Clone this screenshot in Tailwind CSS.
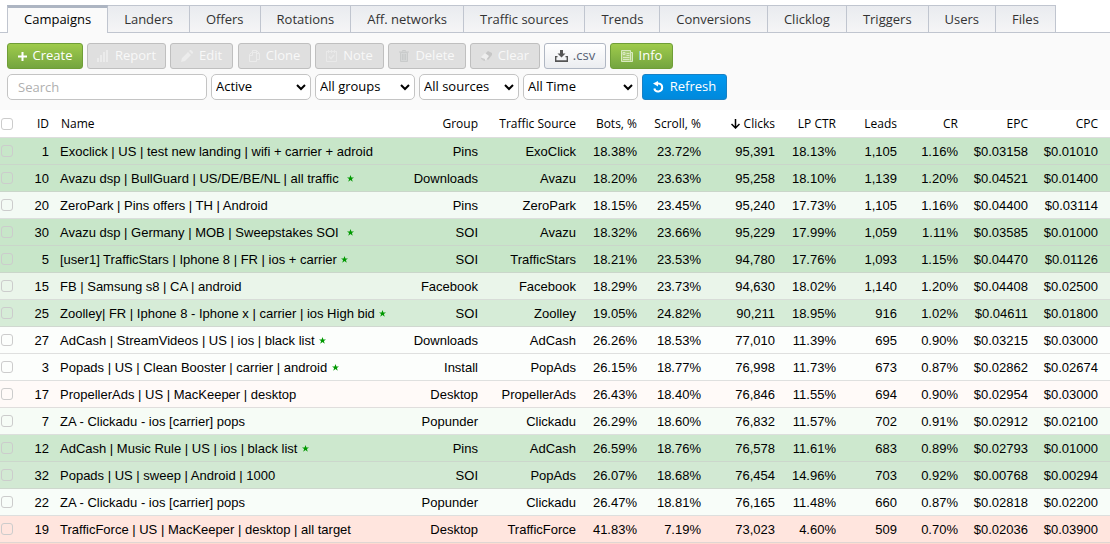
<!DOCTYPE html>
<html lang="en">
<head>
<meta charset="utf-8">
<meta name="viewport" content="width=device-width, initial-scale=1">
<title>Campaigns</title>
<script src="https://cdn.jsdelivr.net/npm/@tailwindcss/browser@4"></script>
</head>
<body class="overflow-x-hidden bg-white font-['Open_Sans',sans-serif] text-[13px] text-black">
<header class="bg-[#fafafa] pb-[10px]">
  <nav class="flex bg-white pt-[5px] font-medium leading-[18px] text-[#333]">
    <span class="w-[7px] border-b border-[#c0c5cf]"></span>
    <a href="#" aria-current="page" class="h-7 border-x border-t-3 border-[#c0c5cf] border-t-[#adb5c2] bg-[#fafafa] px-4 pt-[2px] text-black">Campaigns</a>
    <div id="tabs" class="flex grow border-b border-[#c0c5cf]"></div>
  </nav>
  <div class="mt-[10px] flex gap-1 px-[7px]">
    <button class="flex h-[26px] w-[76px] items-center justify-center gap-[6px] rounded-[3px] border border-[#6f9e37] bg-linear-to-b from-[#9fcb4b] to-[#74a540] text-white"><svg class="size-[9px]" viewBox="0 0 9 9" fill="currentColor"><path d="M3.500 0h2v3.500H9v2H5.500V9h-2V5.500H0v-2h3.500z"/></svg>Create</button>
    <button disabled class="flex h-[26px] w-[79px] items-center justify-center gap-[6px] rounded-[3px] border border-[#bfbfbf] bg-[#dfdfdf] text-[#f8f8f8]"><svg class="size-3" viewBox="0 0 12 12" fill="#ebebeb"><path d="M0 8h2v4H0zM3 5h2v7H3zM6 2h2v10H6zM9 0h2v12H9z"/></svg>Report</button>
    <button disabled class="flex h-[26px] w-[63px] items-center justify-center gap-[6px] rounded-[3px] border border-[#bfbfbf] bg-[#dfdfdf] text-[#f8f8f8]"><svg class="size-3" viewBox="0 0 12 12" fill="#ececec"><path d="M0 12l1-4 6-6 3 3-6 6zM8 1l1-1h1l2 2v1l-1 1z"/></svg>Edit</button>
    <button disabled class="ml-px flex h-[26px] w-[73px] items-center justify-center gap-[6px] rounded-[3px] border border-[#bfbfbf] bg-[#dfdfdf] text-[#f8f8f8]"><svg class="h-3 w-[11px]" viewBox="0 0 11 12" fill="none" stroke="#ebebeb"><path d="M3.500 2.500v-2h4l3 3v6h-3M7.500.500v3h3M3.500 2.500h-1l-2 2v7h7v-9zM3.500 2.500v3h-3"/></svg>Clone</button>
    <button disabled class="flex h-[26px] w-[69px] items-center justify-center gap-[6px] rounded-[3px] border border-[#bfbfbf] bg-[#dfdfdf] text-[#f8f8f8]"><svg class="h-3 w-[11px]" viewBox="0 0 11 12" fill="none" stroke="#e9e9e9"><path d="M.500 1.500h10v10H.500zM0 1.500h11M2.500 0v3M5.500 0v3M8.500 0v3"/><path stroke-width="1.500" d="M3 6.500l2 2.200L8 5"/></svg>Note</button>
    <button disabled class="flex h-[26px] w-[78px] items-center justify-center gap-[6px] rounded-[3px] border border-[#bfbfbf] bg-[#dfdfdf] text-[#f8f8f8]"><svg class="h-3 w-[10px]" viewBox="0 0 10 12" fill="none" stroke="#c9cbcb"><path fill="#d5d7d7" d="M1.500 2.500h7v9h-7z"/><path d="M0 2h10M3.500 1.500v-1h3v1M3.500 4v6M5 4v6M6.500 4v6"/></svg>Delete</button>
    <button disabled class="flex h-[26px] w-[70px] items-center justify-center gap-[6px] rounded-[3px] border border-[#bfbfbf] bg-[#dfdfdf] text-[#f8f8f8]"><svg class="h-3 w-[11px]" viewBox="0 0 11 12"><path fill="#c6c6c6" d="M4 4l3-3 4 2v2L7 10 5 8z"/><path fill="#eeeeee" d="M0 7l4-4 4 3-3 4H3L0 9z"/><path fill="#cdcdcd" d="M0 7.500l4 1.500v2H3L0 9z"/></svg>Clear</button>
    <button class="flex h-[26px] w-[62px] items-center justify-center gap-[5px] rounded-[3px] border border-[#b0b7c3] bg-linear-to-b from-white to-[#ebedf0] text-[#555f73]"><svg class="h-3 w-[13px]" viewBox="0 0 13 12" fill="#555"><path d="M5 0h3v3.500h2.500L6.500 7.500l-4-4H5zM0 6h2.500v1.200H1.400v3h10.200v-3h-1.100V6H13v6H0z"/></svg>.csv</button>
    <button class="flex h-[26px] w-[63px] items-center justify-center gap-[6px] rounded-[3px] border border-[#6f9e37] bg-linear-to-b from-[#9fcb4b] to-[#74a540] text-white"><svg class="size-3" viewBox="0 0 12 12" fill="none" stroke="#d9eac0"><path fill="#abcd76" d="M.500.500h9v2h2v9H.500zM9.500 2.500v8"/><path d="M2 2.500h2v2H2zM5.500 3.500h3M5.500 5.500h3M2 7.500h6.500M2 9.500h6.500"/></svg>Info</button>
  </div>
  <div class="mt-[5px] flex gap-1 px-[7px]">
    <input aria-label="Search" placeholder="Search" class="h-[26px] w-[200px] rounded-[5px] border border-[#c4c4c4] bg-white px-[10px] placeholder:text-[#b0b0b0]">
    <div class="relative"><select aria-label="Status" class="h-[26px] w-[100px] appearance-none rounded-[5px] border border-[#c4c4c4] bg-white pl-1"><option>Active</option></select><svg class="pointer-events-none absolute right-[5px] top-[10px] h-[7px] w-[10px]" viewBox="0 0 10 7" fill="none" stroke="black" stroke-width="2"><path d="M1 1l4 4 4-4"/></svg></div>
    <div class="relative"><select aria-label="Group" class="h-[26px] w-[100px] appearance-none rounded-[5px] border border-[#c4c4c4] bg-white pl-1"><option>All groups</option></select><svg class="pointer-events-none absolute right-[5px] top-[10px] h-[7px] w-[10px]" viewBox="0 0 10 7" fill="none" stroke="black" stroke-width="2"><path d="M1 1l4 4 4-4"/></svg></div>
    <div class="relative"><select aria-label="Source" class="h-[26px] w-[100px] appearance-none rounded-[5px] border border-[#c4c4c4] bg-white pl-1"><option>All sources</option></select><svg class="pointer-events-none absolute right-[5px] top-[10px] h-[7px] w-[10px]" viewBox="0 0 10 7" fill="none" stroke="black" stroke-width="2"><path d="M1 1l4 4 4-4"/></svg></div>
    <div class="relative"><select aria-label="Period" class="h-[26px] w-[115px] appearance-none rounded-[5px] border border-[#c4c4c4] bg-white pl-1"><option>All Time</option></select><svg class="pointer-events-none absolute right-[5px] top-[10px] h-[7px] w-[10px]" viewBox="0 0 10 7" fill="none" stroke="black" stroke-width="2"><path d="M1 1l4 4 4-4"/></svg></div>
    <button class="flex h-[26px] w-[85px] items-center justify-center gap-[6px] rounded-[3px] border border-[#1880c4] bg-linear-to-b from-[#0098f0] to-[#0089dc] text-white"><svg class="h-3 w-[11px]" viewBox="0 0 11 12"><path fill="none" stroke="white" stroke-width="2" d="M4 2.500h1.500a4 4 0 1 1-4.200 5"/><path fill="white" d="M0 2.500L5 0v5.500z"/></svg>Refresh</button>
  </div>
</header>
<table class="w-full table-fixed border-separate border-spacing-0 text-right">
  <colgroup><col class="w-5"><col class="w-[35px]"><col><col class="w-20"><col class="w-[98px]"><col class="w-[61px]"><col class="w-16"><col class="w-[74px]"><col class="w-[61px]"><col class="w-[61px]"><col class="w-[61px]"><col class="w-[70px]"><col class="w-[76px]"></colgroup>
  <thead><tr id="head" class="h-7 text-xs"></tr></thead>
  <tbody id="rows" class="font-['Liberation_Sans',sans-serif] text-[13px]"></tbody>
</table>
<div class="h-px bg-[#ffd9d0]"></div>
<script>
const box = label => `<input type="checkbox" aria-label="${label}" class="block ml-px size-3 appearance-none rounded-[3px] border border-[#ccc]">`;
document.getElementById('tabs').innerHTML = ['Landers','Offers','Rotations','Aff. networks','Traffic sources','Trends','Conversions','Clicklog','Triggers','Users','Files']
  .map(t => `<a href="#" class="h-[27px] border-r border-t border-[#c0c5cf] bg-linear-to-b from-[#e9ebef] to-[#f5f5f6] px-4 pt-1">${t}</a>`).join('');
const arrow = '<svg class="mr-1 inline-block h-[10px] w-[9px] align-[-1px]" viewBox="0 0 9 10" fill="none" stroke="black" stroke-width="1.500"><path d="M4.500 0v9M.500 5l4 4 4-4"/></svg>';
const heads = ['ID','Name','Group','Traffic Source','Bots, %','Scroll, %',arrow + 'Clicks','LP CTR','Leads','CR','EPC','CPC'];
document.getElementById('head').innerHTML = `<th class="border-b border-[#ddd]">${box('Select all')}</th>` + heads
  .map((h, i) => `<th class="border-b border-[#ddd] whitespace-nowrap font-medium ${i === 1 ? 'pl-[6px] text-left' : ''} ${i === 11 ? 'pr-3' : 'pr-[6px]'}">${h}</th>`).join('');
const data = `#c8e6c9;1;Exoclick | US | test new landing | wifi + carrier + adroid;Pins;ExoClick;18.38%;23.72%;95,391;18.13%;1,105;1.16%;$0.03158;$0.01010
#c8e6c9;10;Avazu dsp | BullGuard | US/DE/BE/NL | all traffic\u00a0 *;Downloads;Avazu;18.20%;23.63%;95,258;18.10%;1,139;1.20%;$0.04521;$0.01400
#f3faf4;20;ZeroPark | Pins offers | TH | Android;Pins;ZeroPark;18.15%;23.45%;95,240;17.73%;1,105;1.16%;$0.04400;$0.03114
#c8e6c9;30;Avazu dsp | Germany | MOB | Sweepstakes SOI\u00a0 *;SOI;Avazu;18.32%;23.66%;95,229;17.99%;1,059;1.11%;$0.03585;$0.01000
#c8e6c9;5;[user1] TrafficStars | Iphone 8 | FR | ios + carrier *;SOI;TrafficStars;18.21%;23.53%;94,780;17.76%;1,093;1.15%;$0.04470;$0.01126
#eaf5ea;15;FB | Samsung s8 | CA | android;Facebook;Facebook;18.29%;23.73%;94,630;18.02%;1,140;1.20%;$0.04408;$0.02500
#d6ecd7;25;Zoolley| FR | Iphone 8 - Iphone x | carrier | ios High bid *;SOI;Zoolley;19.05%;24.82%;90,211;18.95%;916;1.02%;$0.04611;$0.01800
#fcfefc;27;AdCash | StreamVideos | US | ios | black list *;Downloads;AdCash;26.26%;18.53%;77,010;11.39%;695;0.90%;$0.03215;$0.03000
#fcfefc;3;Popads | US | Clean Booster | carrier | android *;Install;PopAds;26.15%;18.77%;76,998;11.73%;673;0.87%;$0.02862;$0.02674
#fffaf8;17;PropellerAds | US | MacKeeper | desktop;Desktop;PropellerAds;26.43%;18.40%;76,846;11.55%;694;0.90%;$0.02954;$0.03000
#f6fcf6;7;ZA - Clickadu - ios [carrier] pops;Popunder;Clickadu;26.29%;18.60%;76,832;11.57%;702;0.91%;$0.02912;$0.02100
#cde8ce;12;AdCash | Music Rule | US | ios | black list *;Pins;AdCash;26.59%;18.76%;76,578;11.61%;683;0.89%;$0.02793;$0.01000
#d2e9d3;32;Popads | US | sweep | Android | 1000;SOI;PopAds;26.07%;18.68%;76,454;14.96%;703;0.92%;$0.00768;$0.00294
#f8fdf9;22;ZA - Clickadu - ios [carrier] pops;Popunder;Clickadu;26.47%;18.81%;76,165;11.48%;660;0.87%;$0.02818;$0.02200
#ffe5de;19;TrafficForce | US | MacKeeper | desktop | all target;Desktop;TrafficForce;41.83%;7.19%;73,023;4.60%;509;0.70%;$0.02036;$0.03900`;
const star = '<svg class="ml-px inline-block size-[7px] align-[1px]" viewBox="0 0 10 10" fill="#090"><path d="M5 0l1.300 3.500H10L7 5.800 8.200 9.800 5 7.300 1.800 9.800 3 5.800 0 3.500h3.700z"/></svg>';
document.getElementById('rows').innerHTML = data.split('\n').map(line => {
  const [color, ...cells] = line.split(';');
  return `<tr class="h-[27px]" style="background:${color}"><td class="border-b border-[#ccc]/60">${box('Select campaign ' + cells[0])}</td>` + cells
    .map((c, i) => `<td class="border-b border-[#ccc]/60 pt-px whitespace-nowrap ${i === 1 ? 'pl-[5px] text-left' : ''} ${i === 11 ? 'pr-3' : 'pr-[6px]'}">${c.replace('*', star)}</td>`).join('') + '</tr>';
}).join('');
</script>
</body>
</html>
